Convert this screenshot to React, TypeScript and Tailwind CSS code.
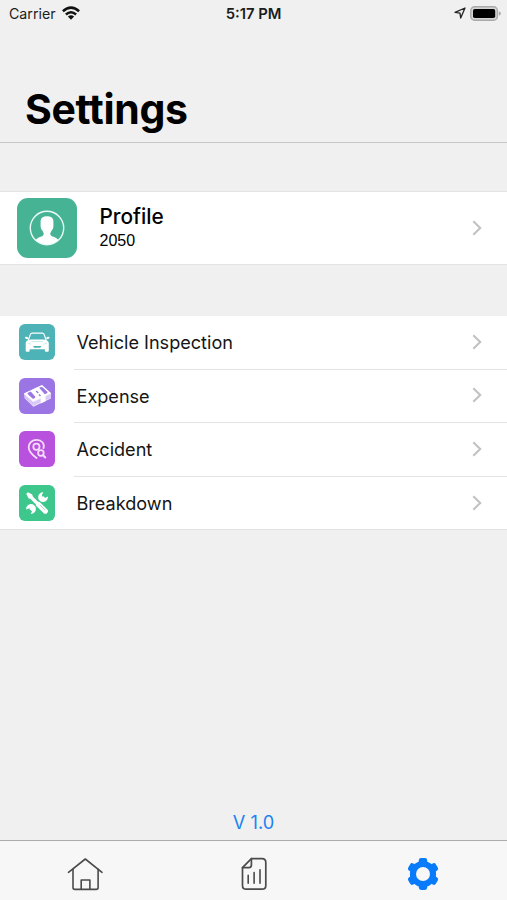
import type { ReactNode } from 'react'

interface MenuItem {
  label: string
  tile: string
  icon: ReactNode
}

function CarIcon() {
  return (
    <svg viewBox="0 0 36 36" className="h-9 w-9" fill="#fff">
      <path d="M7.4 17.2Q8.6 15.6 12 15.4H24.4Q27.8 15.6 29 17.2Q29.8 18.2 29.8 19.6V26.4Q29.8 27.8 28.6 27.8H26.9Q25.8 27.8 25.8 26.4V25.2H10.7V26.4Q10.7 27.8 9.6 27.8H7.9Q6.7 27.8 6.7 26.4V19.6Q6.7 18.2 7.4 17.2Z" />
      <path d="M9.4 16 11.4 10.4Q11.8 9.1 13.2 9.1H23.3Q24.7 9.1 25.1 10.4L27.1 16" fill="none" stroke="#fff" strokeWidth="1.2" />
      <path d="M6.1 13Q8.4 12.2 9.4 14.2L8.6 15.3Q5.6 15.1 6.1 13ZM30.4 13Q28.1 12.2 27.1 14.2L27.9 15.3Q30.9 15.1 30.4 13Z" />
      <path d="M14 22H22.5L21.3 23.8H15.2Z" fill="#4db3b6" />
      <path d="M8.6 18.9 12 20.4M27.9 18.9 24.5 20.4M12.5 17.6H24" stroke="#b9e2e2" strokeWidth=".8" fill="none" />
    </svg>
  )
}

function CashIcon() {
  return (
    <svg viewBox="0 0 36 36" className="h-9 w-9">
      <path d="M5 15.7 23 7.2 32 15.3V20.6L14.4 28.7 5.6 20.3Z" fill="#e9dffb" />
      <path d="M4.8 15.6 23 7.1 32 15.2 14.2 23.6Z" fill="#fff" />
      <path d="M5.4 17.3 14.3 25.1 31.9 17M5.7 19 14.4 26.7 31.9 18.8" stroke="#b99aef" strokeWidth=".55" fill="none" />
      <path d="M8.3 15.8Q8.8 14.3 11.7 13.5L16.5 18.9Q15.8 20.8 13.8 20.7Z" fill="#9a75e3" />
      <path d="M20.2 9.8Q22 8.6 23.8 9.4L28.6 14Q28.6 15.6 25.8 16.2Z" fill="#9a75e3" />
      <path d="M13.4 11.7 18 9.5 26.5 17.8V23.2L21.7 25.4V20.1Z" fill="#fff" />
      <path d="M17.3 13.1 19.2 15.1M20 16.5 21.5 18" stroke="#9a75e3" strokeWidth="1.4" />
    </svg>
  )
}

function AccidentIcon() {
  return (
    <svg viewBox="0 0 36 36" className="h-9 w-9" fill="none" stroke="#f6dcfb" strokeWidth="1.8" strokeLinecap="round">
      <path d="M24.5 17.2C26 12.5 22.5 8.8 17.7 8.8C13 8.8 9.7 12.1 9.7 16.3C9.7 20.2 12.8 23.6 17.6 27" />
      <circle cx="17.4" cy="15.7" r="3.1" />
      <circle cx="21.9" cy="22" r="2.8" />
      <path d="M24.1 24.2 26.3 26.5" strokeWidth="2" />
    </svg>
  )
}

function ToolsIcon() {
  return (
    <svg viewBox="0 0 36 36" className="h-9 w-9">
      <path d="M22.2 15.2 25.2 12.1M11.6 25.2 15.5 21.2" stroke="#fff" strokeWidth="3.2" />
      <path d="M28.9 11.6A4.9 4.9 0 1 1 24.3 7.3L22.9 10.1 23.6 12.4 26 13Z" fill="#fff" />
      <path d="M7.1 24.4A4.9 4.9 0 1 1 11.8 28.9L13.1 26.1 12.3 23.9 10 23.4Z" fill="#fff" />
      <path d="M7.2 8.8 9 7.2 13.2 9.6 14 11.8 19.4 16.9 16.9 19.4 11.6 14.1 9.5 13.3Z" fill="#fff" />
      <path d="M19.6 19.6 26.3 26.1" stroke="#fff" strokeWidth="5.2" strokeLinecap="round" />
      <path d="M21.2 20.2 26.2 25.1" stroke="#3dc78c" strokeWidth=".5" />
    </svg>
  )
}

function Chevron() {
  return (
    <svg viewBox="0 0 10 16" className="mr-[25px] h-4 w-2.5 shrink-0" fill="none" stroke="#c2c2c4" strokeWidth="2.1">
      <path d="M1.3 1.3 8.2 8 1.3 14.7" />
    </svg>
  )
}

const menuItems: MenuItem[] = [
  { label: 'Vehicle Inspection', tile: 'bg-[#4db3b6]', icon: <CarIcon /> },
  { label: 'Expense', tile: 'bg-[#9a75e3]', icon: <CashIcon /> },
  { label: 'Accident', tile: 'bg-[#b951df]', icon: <AccidentIcon /> },
  { label: 'Breakdown', tile: 'bg-[#3dc78c]', icon: <ToolsIcon /> },
]

function StatusBar() {
  return (
    <div className="grid h-[26px] grid-cols-3 items-center text-[14.2px] text-[#1c1c1c]">
      <div className="flex items-center gap-1.5 pl-[9px]">
        <span className="pt-0.5">Carrier</span>
        <svg viewBox="0 0 18 14" className="h-3.5 w-[18px]" fill="none" stroke="#111" strokeWidth="2.5">
          <path d="M.9 5.2Q9 -2 17.1 5.2" />
          <path d="M3.9 8.5Q9 4 14.1 8.5" />
          <path d="M9 13.7 5.9 10.6Q9 8 12.1 10.6Z" fill="#111" stroke="none" />
        </svg>
      </div>
      <div className="pt-0.5 text-center text-[14.8px] font-semibold">5:17 PM</div>
      <div className="flex items-center justify-end gap-1 pr-[6px]">
        <svg viewBox="0 0 12 12" className="h-3 w-3" fill="none" stroke="#222" strokeWidth="1.3" strokeLinejoin="round">
          <path d="M11 1 1 5.3 6 6.1 6.7 11Z" />
        </svg>
        <svg viewBox="0 0 31 15" className="h-[15px] w-[31px]">
          <rect x=".8" y=".8" width="26.6" height="13.4" rx="3.8" fill="#d4d4d4" stroke="#aaa" strokeWidth="1.4" />
          <rect x="3" y="3" width="22.2" height="9" rx="1.8" fill="#000" />
          <path d="M28.8 5.2Q31 6 31 7.5T28.8 9.8Z" fill="#aaa" />
        </svg>
      </div>
    </div>
  )
}

function TabBar() {
  return (
    <nav className="grid h-[60px] grid-cols-3 items-start justify-items-center border-t border-[#acacac] bg-[#f7f7f7] pt-4">
      <svg viewBox="0 0 36 34" className="h-[34px] w-9" fill="none" stroke="#4b4b4b" strokeWidth="1.6" strokeLinecap="round" strokeLinejoin="round">
        <path d="M1.5 15.3 18.3 2 35 15.3" />
        <path d="M6 12.2V30.5Q6 32.4 7.8 32.4H29.3Q31.1 32.4 31.1 30.5V12.2" />
        <path d="M14.2 32V23H22.9V32" />
      </svg>
      <svg viewBox="0 0 26 34" className="h-[34px] w-[26px]" fill="none" stroke="#4b4b4b" strokeWidth="1.7" strokeLinecap="round" strokeLinejoin="round">
        <path d="M10.4 1.7H21Q24.8 1.7 24.8 5.5V28.4Q24.8 32.2 21 32.2H5.3Q1.5 32.2 1.5 28.4V10.6Z" />
        <path d="M10.4 1.7V8Q10.4 10.6 8 10.6H1.5" />
        <path d="M7.2 18.3V26.3M13.1 15.6V26.3M19 12.7V26.3" strokeWidth="1.6" />
      </svg>
      <svg viewBox="0 0 32 34" className="h-[34px] w-8">
        <circle cx="16" cy="17" r="13.1" fill="#087bfb" />
        <g fill="#087bfb">
          <rect x="11.8" y="1" width="8.4" height="32" rx="2.4" />
          <rect x="11.8" y="1" width="8.4" height="32" rx="2.4" transform="rotate(60 16 17)" />
          <rect x="11.8" y="1" width="8.4" height="32" rx="2.4" transform="rotate(120 16 17)" />
        </g>
        <circle cx="16" cy="17" r="7" fill="#f7f7f7" />
      </svg>
    </nav>
  )
}

export default function App() {
  return (
    <main className="flex h-[900px] w-[507px] flex-col overflow-hidden bg-[#f0f0f0] font-['Inter',sans-serif] text-[#151515]">
      {/* Header */}
      <header className="flex h-[143px] flex-col justify-between border-b border-[#c6c6c6]">
        <StatusBar />
        <h1 className="pb-2 pl-[25px] text-[41px] font-bold leading-[50px] tracking-[-0.35px] text-black">Settings</h1>
      </header>

      {/* Profile */}
      <section className="mt-12 flex h-[74px] items-center border-y border-[#e4e4e4] bg-white">
        <div className="ml-[17px] flex h-[60px] w-[60px] items-center justify-center rounded-[11px] bg-[#46b494]">
          <svg viewBox="0 0 36 36" className="h-9 w-9">
            <path d="M6.3 30.3Q8 27.8 13.2 26.2Q14.9 25.5 14.8 23.6L13.2 20.2Q11.8 19.6 11.6 16.6V11Q11.7 6.2 18 6.2T24.4 11V16.6Q24.2 19.6 22.8 20.2L21.2 23.6Q21.1 25.5 22.8 26.2Q28 27.8 29.7 30.3Q24.9 35 18 35T6.3 30.3Z" fill="#fff" />
            <circle cx="18" cy="18" r="16.7" fill="none" stroke="#eafaf5" strokeWidth="1.4" />
          </svg>
        </div>
        <div className="ml-[22.5px] grow pt-px">
          <div className="text-[20.8px] font-medium leading-6 text-black">Profile</div>
          <div className="font-['Liberation_Sans',sans-serif] text-[16px] leading-6 text-black">2050</div>
        </div>
        <Chevron />
      </section>

      {/* Menu */}
      <ul className="mt-[51px] h-[214px] border-b border-[#e2e2e2] bg-white">
        {menuItems.map((item, i) => (
          <li key={item.label} className="flex h-[53.6px] items-center">
            <div className={`mb-[1.5px] ml-[18.5px] h-9 w-9 shrink-0 rounded-[6px] ${item.tile}`}>{item.icon}</div>
            <div
              className={`ml-[19px] flex h-full grow items-center pb-px pl-[3px] ${i < menuItems.length - 1 ? 'border-b border-[#e4e4e4]' : ''}`}
            >
              <span className="grow pt-[1.5px] text-[18.1px]">{item.label}</span>
              <Chevron />
            </div>
          </li>
        ))}
      </ul>

      <footer className="mt-auto">
        <p className="pb-1.5 text-center text-[18.2px] leading-6 text-[#1d82ef]">V 1.0</p>
        <TabBar />
      </footer>
    </main>
  )
}
